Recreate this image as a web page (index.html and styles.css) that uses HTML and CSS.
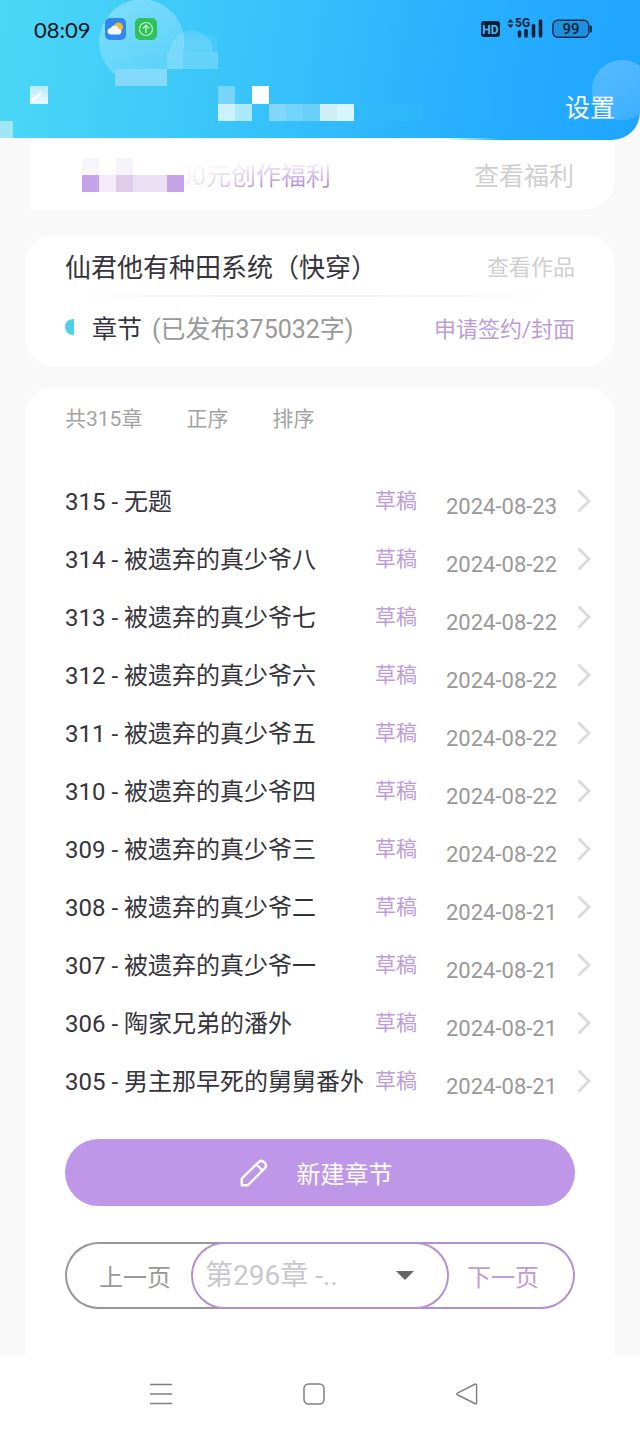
FILE: index.html
```html
<!DOCTYPE html>
<html lang="zh-CN">
<head>
    <meta charset="UTF-8">
    <meta name="viewport" content="width=device-width, initial-scale=1.0">
    <title>章节管理</title>
    <link rel="stylesheet" href="styles.css">
</head>
<body>
    <header class="header">
        <svg class="header-art" width="520" height="140" viewBox="0 0 520 140" aria-hidden="true">
            <defs>
                <linearGradient id="bubble" x1="0" y1="0" x2="0.4" y2="1">
                    <stop offset="0" stop-color="#fff" stop-opacity="0.32"/>
                    <stop offset="1" stop-color="#fff" stop-opacity="0.16"/>
                </linearGradient>
                <linearGradient id="edge">
                    <stop offset="0.88" stop-color="#fff"/>
                    <stop offset="1" stop-color="#fff" stop-opacity="0"/>
                </linearGradient>
            </defs>
            <path d="M115 75A42.500 42.500 0 1 1 183 52V69H115Z" fill="url(#bubble)"/>
            <path d="M170 52A21.500 21.500 0 0 1 213 52Z" fill="#fff" opacity="0.14"/>
            <rect x="183" y="36" width="35" height="33" fill="#fff" opacity="0.06"/>
            <rect x="167" y="52" width="51" height="17" fill="#fff" opacity="0.17"/>
            <rect x="115" y="69" width="52" height="17" fill="#84dafc"/>
            <rect x="218" y="86" width="17" height="18" fill="#76d5f8"/>
            <rect x="252" y="86" width="17" height="18" fill="#fafeff"/>
            <rect x="218" y="104" width="17" height="17" fill="#ccf3fd"/>
            <rect x="235" y="104" width="17" height="17" fill="#a9e9f8"/>
            <rect x="269" y="104" width="17" height="17" fill="#80d7f8"/>
            <rect x="286" y="104" width="17" height="17" fill="#74d3f9"/>
            <rect x="303" y="104" width="17" height="17" fill="#6ccffa"/>
            <rect x="320" y="104" width="17" height="17" fill="#cdeef5"/>
            <rect x="337" y="104" width="17" height="17" fill="#d8f7fc"/>
            <rect x="354" y="104" width="68" height="17" fill="#2fbcf8" opacity="0.5"/>
            <rect x="0" y="121" width="13" height="17" fill="#a0e7f3"/>
            <rect x="0" y="138" width="30" height="2" fill="#f9f9f9"/>
            <rect x="30" y="138" width="470" height="2" fill="url(#edge)"/>
        </svg>
        <span class="header-bubble"></span>

        <div class="status-bar">
            <span class="clock">08:09</span>
            <svg class="app-icon" width="22" height="22" viewBox="0 0 22 22" aria-hidden="true">
                <rect x="0" y="0" width="21" height="22" rx="5" fill="#3286f2"/>
                <circle cx="13.500" cy="9" r="4.500" fill="#f9b92e"/>
                <path d="M6 16.500a3.300 3.300 0 0 1-.3-6.600a4.500 4.500 0 0 1 8.300 1a2.900 2.900 0 0 1 .5 5.600z" fill="#f1f6ff"/>
            </svg>
            <svg class="app-icon" width="22" height="22" viewBox="0 0 22 22" aria-hidden="true">
                <rect x="0" y="0" width="22" height="22" rx="5" fill="#2ec35a"/>
                <circle cx="11" cy="11" r="6.500" fill="none" stroke="#c9f5d0" stroke-width="1.200"/>
                <path d="M11 15V7.500M8 10.200L11 7.300L14 10.200" fill="none" stroke="#c9f5d0" stroke-width="1.300"/>
            </svg>
            <svg class="signal" width="112" height="24" viewBox="0 0 112 24">
                <rect x="0" y="4" width="19" height="16" rx="3" fill="#0b2238"/>
                <text x="9.500" y="16.500" class="svg-text svg-hd" text-anchor="middle">HD</text>
                <path d="M26.500 5.500L29.500 2L32.500 5.500ZM26.500 7.500L29.500 11L32.500 7.500Z" fill="#0b2238"/>
                <text x="34" y="10" class="svg-text svg-net">5G</text>
                <path d="M38.500 15V19M45 13.500V19M52.500 8.500V19M59.500 4V19" fill="none" stroke="#0b2238" stroke-width="3.600" stroke-linecap="round"/>
                <rect x="71.800" y="3.300" width="36" height="17" rx="5" fill="#0a4b80" fill-opacity="0.25" stroke="#0b2a4a" stroke-width="1.400"/>
                <path d="M109.800 9.500V14.500" stroke="#0b2a4a" stroke-width="2" stroke-linecap="round"/>
                <text x="90" y="17" class="svg-text svg-battery" text-anchor="middle">99</text>
            </svg>
        </div>

        <div class="title-bar">
            <button class="back" aria-label="返回">
                <svg width="18" height="18" viewBox="0 0 18 18" aria-hidden="true">
                    <defs>
                        <linearGradient id="tile" x1="0" y1="0" x2="0" y2="1">
                            <stop offset="0" stop-color="#b4ebf9"/>
                            <stop offset="1" stop-color="#e9fbfe"/>
                        </linearGradient>
                    </defs>
                    <rect width="18" height="18" fill="url(#tile)"/>
                    <path d="M2 15L10.500 7" stroke="#fff" stroke-width="2.600" stroke-linecap="round"/>
                </svg>
            </button>
            <a class="settings" href="#">设置</a>
        </div>
    </header>

    <main class="content">
        <section class="card welfare">
            <svg class="welfare-tiles" width="102" height="34" viewBox="0 0 102 34" aria-hidden="true">
                <rect x="0" y="0" width="17" height="17" fill="#f9f6fb"/>
                <rect x="34" y="0" width="17" height="17" fill="#f7f3fa"/>
                <rect x="0" y="17" width="17" height="17" fill="#c5a3e8"/>
                <rect x="17" y="17" width="17" height="17" fill="#f3ebf9"/>
                <rect x="34" y="17" width="17" height="17" fill="#decce9"/>
                <rect x="51" y="17" width="34" height="17" fill="#ebdff3"/>
                <rect x="85" y="17" width="17" height="17" fill="#c5a3e5"/>
            </svg>
            <span class="welfare-text">00元创作福利</span>
            <a class="more" href="#">查看福利</a>
        </section>

        <section class="card book">
            <div class="book-row">
                <h1 class="book-title">仙君他有种田系统（快穿）</h1>
                <a class="book-link" href="#">查看作品</a>
            </div>
            <div class="divider"></div>
            <div class="book-row">
                <span class="half-dot"></span>
                <h2 class="chapter-label">章节</h2>
                <span class="word-count">(已发布375032字)</span>
                <a class="book-link accent" href="#">申请签约/封面</a>
            </div>
        </section>

        <section class="card chapters">
            <div class="toolbar">
                <span class="total">共315章</span>
                <button class="sort">正序</button>
                <button class="sort">排序</button>
            </div>

            <svg class="sprite" aria-hidden="true">
                <symbol id="chevron" viewBox="0 0 14 24">
                    <path d="M1.500 1.500L12 12L1.500 22.500" fill="none" stroke="#dcdcdc" stroke-width="3"/>
                </symbol>
            </svg>

            <ul class="chapter-list">
                <li><a class="chapter" href="#"><span class="name">315 - 无题</span><span class="draft">草稿</span><time class="date">2024-08-23</time><svg class="arrow"><use href="#chevron"/></svg></a></li>
                <li><a class="chapter" href="#"><span class="name">314 - 被遗弃的真少爷八</span><span class="draft">草稿</span><time class="date">2024-08-22</time><svg class="arrow"><use href="#chevron"/></svg></a></li>
                <li><a class="chapter" href="#"><span class="name">313 - 被遗弃的真少爷七</span><span class="draft">草稿</span><time class="date">2024-08-22</time><svg class="arrow"><use href="#chevron"/></svg></a></li>
                <li><a class="chapter" href="#"><span class="name">312 - 被遗弃的真少爷六</span><span class="draft">草稿</span><time class="date">2024-08-22</time><svg class="arrow"><use href="#chevron"/></svg></a></li>
                <li><a class="chapter" href="#"><span class="name">311 - 被遗弃的真少爷五</span><span class="draft">草稿</span><time class="date">2024-08-22</time><svg class="arrow"><use href="#chevron"/></svg></a></li>
                <li><a class="chapter" href="#"><span class="name">310 - 被遗弃的真少爷四</span><span class="draft">草稿</span><time class="date">2024-08-22</time><svg class="arrow"><use href="#chevron"/></svg></a></li>
                <li><a class="chapter" href="#"><span class="name">309 - 被遗弃的真少爷三</span><span class="draft">草稿</span><time class="date">2024-08-22</time><svg class="arrow"><use href="#chevron"/></svg></a></li>
                <li><a class="chapter" href="#"><span class="name">308 - 被遗弃的真少爷二</span><span class="draft">草稿</span><time class="date">2024-08-21</time><svg class="arrow"><use href="#chevron"/></svg></a></li>
                <li><a class="chapter" href="#"><span class="name">307 - 被遗弃的真少爷一</span><span class="draft">草稿</span><time class="date">2024-08-21</time><svg class="arrow"><use href="#chevron"/></svg></a></li>
                <li><a class="chapter" href="#"><span class="name">306 - 陶家兄弟的潘外</span><span class="draft">草稿</span><time class="date">2024-08-21</time><svg class="arrow"><use href="#chevron"/></svg></a></li>
                <li><a class="chapter" href="#"><span class="name">305 - 男主那早死的舅舅番外</span><span class="draft">草稿</span><time class="date">2024-08-21</time><svg class="arrow"><use href="#chevron"/></svg></a></li>
            </ul>

            <button class="create">
                <svg width="28" height="28" viewBox="0 0 28 28" fill="none" stroke="#fff" stroke-width="2.400" stroke-linejoin="round" aria-hidden="true">
                    <path d="M1.800 26.200V19.500L18.800 3Q21.500 .6 24.300 3.300Q27.600 6.500 24.800 9.200L8 26.200Z"/>
                    <path d="M16.500 5.500L22.500 11.500"/>
                </svg>
                <span>新建章节</span>
            </button>

            <div class="pager">
                <button class="page-btn prev">上一页</button>
                <select class="page-select" aria-label="选择章节">
                    <option>第296章 -..</option>
                </select>
                <button class="page-btn next">下一页</button>
            </div>
        </section>
    </main>

    <nav class="system-nav">
        <button aria-label="菜单">
            <svg width="22" height="22" viewBox="0 0 22 22"><path d="M0 1.500H22M0 11H22M0 20.500H22"/></svg>
        </button>
        <button aria-label="主页">
            <svg width="22" height="22" viewBox="0 0 22 22"><rect x="1" y="1" width="20" height="20" rx="4.500"/></svg>
        </button>
        <button aria-label="后退">
            <svg width="22" height="22" viewBox="0 0 22 22"><path d="M1.800 9.800L18.800 1.300Q20.600 .6 20.600 2.500V19.200Q20.600 21.200 18.800 20.500L1.800 12Q-.2 10.900 1.800 9.800Z"/></svg>
        </button>
    </nav>
</body>
</html>
```
FILE: styles.css
```css
* {
    box-sizing: border-box;
}
body {
    margin: 0;
    background: #f9f9f9;
    color: #35343c;
    font-family: Roboto, "Noto Sans CJK SC", sans-serif;
    font-weight: 400;
}
h1, h2, ul {
    margin: 0;
    padding: 0;
    font-weight: 400;
    list-style: none;
}
a {
    color: inherit;
    text-decoration: none;
}
button, select {
    margin: 0;
    padding: 0;
    border: none;
    background: none;
    color: inherit;
    font: inherit;
    cursor: pointer;
}
svg {
    display: block;
}

/* header */
.header {
    position: relative;
    height: 140px;
    overflow: hidden;
    border-radius: 0 0 28px 0;
    background: linear-gradient(100deg, #4bd8f6 0%, #36c0fb 45%, #28b0ff 70%, #1fa4ff 100%);
}
.header-art {
    position: absolute;
    top: 0;
    left: 0;
}
.header-bubble {
    position: absolute;
    top: 60px;
    right: -12px;
    width: 60px;
    height: 60px;
    border-radius: 50%;
    background: linear-gradient(150deg, rgba(255, 255, 255, 0.24), rgba(255, 255, 255, 0.12));
}
.status-bar {
    position: relative;
    display: flex;
    align-items: center;
    height: 58px;
    padding: 0 47px 0 34px;
}
.clock {
    width: 71px;
    color: #06141c;
    font-family: Lato, sans-serif;
    font-size: 22px;
    font-weight: 400;
}
.app-icon {
    margin-right: 8px;
}
.signal {
    margin-left: auto;
}
.svg-text {
    font-family: Roboto, sans-serif;
    font-weight: 700;
    fill: #0b2238;
}
.svg-hd {
    font-size: 12px;
    fill: #4db8f8;
}
.svg-net {
    font-size: 12px;
}
.svg-battery {
    font-size: 15px;
    font-weight: 500;
}
.title-bar {
    position: relative;
    display: flex;
    align-items: flex-start;
    justify-content: space-between;
    padding: 28px 25px 0 30px;
}
.settings {
    color: #fff;
    font-size: 25px;
    line-height: 46px;
}

/* cards */
.content {
    padding: 0 26px;
}
.card {
    border-radius: 28px;
    background: #fff;
}
.welfare {
    display: flex;
    align-items: center;
    height: 69px;
    margin: 0 0 26px 4px;
    padding: 0 40px 0 52px;
    border-radius: 0 0 28px 0;
}
.welfare-text {
    margin-left: -6px;
    padding-bottom: 2px;
    background: linear-gradient(#f0e6f7 25%, #b08fd2 80%);
    -webkit-background-clip: text;
    background-clip: text;
    color: transparent;
    font-size: 25px;
    -webkit-mask-image: linear-gradient(90deg, rgba(0, 0, 0, 0.1), rgba(0, 0, 0, 0.4) 25%, #000 60%);
    mask-image: linear-gradient(90deg, rgba(0, 0, 0, 0.1), rgba(0, 0, 0, 0.4) 25%, #000 60%);
}
.more {
    margin-left: auto;
    padding-bottom: 2px;
    color: #cfcfcf;
    font-size: 25px;
}

.book {
    height: 131px;
    margin-bottom: 21px;
    padding: 0 39px;
}
.book-row {
    display: flex;
    align-items: center;
    height: 60px;
}
.divider {
    height: 2px;
    background: linear-gradient(90deg, #fff, #f4f4f4 30%, #f4f4f4 60%, #fff);
}
.book-title {
    font-size: 26px;
}
.book-link {
    margin-left: auto;
    color: #cfcfcf;
    font-size: 22px;
}
.book-link.accent {
    color: #bd9cdb;
}
.half-dot {
    width: 9px;
    height: 16px;
    margin-right: 18px;
    border-radius: 8px 0 0 8px;
    background: #4fd1ee;
}
.chapter-label {
    font-size: 25px;
}
.word-count {
    margin-left: 10px;
    color: #999;
    font-size: 25px;
}

/* chapter list */
.chapters {
    padding: 14px 39px 46px;
    border-radius: 28px 28px 0 0;
}
.toolbar {
    display: flex;
    align-items: center;
    gap: 44px;
    height: 32px;
    color: #a3a3a3;
    font-size: 21px;
}
.sprite {
    display: none;
}
.chapter-list {
    margin: 39px -16px 29px 0;
}
.chapter {
    display: grid;
    grid-template-columns: 1fr 71px 131px 14px;
    align-items: center;
    height: 58px;
    white-space: nowrap;
}
.name {
    padding-bottom: 4px;
    font-size: 24px;
}
.draft {
    padding-bottom: 4px;
    color: #bd9cdb;
    font-size: 21px;
}
.date {
    padding-top: 10px;
    color: #999;
    font-size: 22px;
}
.arrow {
    width: 14px;
    height: 24px;
}

.create {
    display: flex;
    align-items: center;
    justify-content: center;
    gap: 29px;
    width: 100%;
    height: 67px;
    margin-bottom: 36px;
    padding-right: 8px;
    border-radius: 34px;
    background: #bf97e8;
    color: #fff;
    font-size: 24px;
}

/* pager */
.pager {
    display: flex;
    height: 67px;
}
.page-btn {
    flex: 0 0 160px;
    border: 2px solid #b48fd6;
    color: #bd9cdb;
    font-size: 24px;
}
.prev {
    padding-left: 32px;
    border-color: #979797;
    border-right: none;
    border-radius: 34px 0 0 34px;
    color: #999;
    text-align: left;
}
.next {
    padding-right: 34px;
    border-left: none;
    border-radius: 0 34px 34px 0;
    text-align: right;
}
.page-select {
    position: relative;
    flex: 1;
    min-width: 0;
    margin: 0 -34px;
    padding: 0 48px 0 12px;
    border: 2px solid #b48fd6;
    border-radius: 34px;
    appearance: none;
    background: #fff url("data:image/svg+xml,%3Csvg xmlns='http://www.w3.org/2000/svg' width='18' height='9'%3E%3Cpath d='M0 0H18L9 9Z' fill='%23666'/%3E%3C/svg%3E") no-repeat right 33px center;
    color: #c9c8d0;
    font-size: 28px;
}

/* system navigation */
.system-nav {
    display: flex;
    align-items: center;
    justify-content: center;
    gap: 131px;
    height: 78px;
    padding-right: 12px;
    background: #fff;
}
.system-nav svg {
    fill: none;
    stroke: #808080;
    stroke-width: 1.5;
}
```
